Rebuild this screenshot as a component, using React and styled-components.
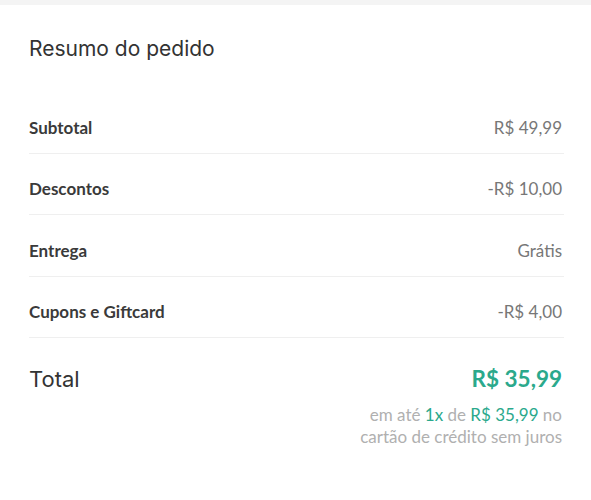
import React from "react";
import styled, { createGlobalStyle } from "styled-components";

const Global = createGlobalStyle`
  html, body { margin: 0; padding: 0; background: #fff; }
  body { font-family: Lato, "Liberation Sans", sans-serif; -webkit-font-smoothing: antialiased; }
`;

const TopBar = styled.div`
  height: 5px;
  background: #f4f4f4;
`;

const Panel = styled.section`
  padding: 30px 29px 0 29px;
  width: 535px;
`;

const Title = styled.h2`
  margin: 0;
  font-family: Inter, "Open Sans", sans-serif;
  font-weight: 400;
  font-size: 21px;
  color: #333;
  line-height: 28px;
`;

const List = styled.div`
  margin-top: 32px;
  display: flex;
  flex-direction: column;
`;

const Row = styled.div`
  display: flex;
  align-items: center;
  justify-content: space-between;
  padding: 26.33px 2px 16px 0;
  line-height: 18px;
  border-bottom: 1px solid #efefef;
  &:first-child { padding-top: 24px; }
`;

const Label = styled.span`
  font-weight: 700;
  font-size: 17px;
  color: #3a3a3a;
`;

const Value = styled.span`
  font-size: 17px;
  color: #777;
`;

const TotalRow = styled.div`
  display: flex;
  justify-content: space-between;
  align-items: center;
  line-height: 30px;
  margin-top: 26px;
  padding-right: 2px;
`;

const TotalLabel = styled.span`
  font-family: Inter, "Open Sans", sans-serif;
  font-size: 22px;
  color: #333;
`;

const TotalValue = styled.span`
  font-weight: 700;
  font-size: 22.5px;
  color: #2ba98c;
`;

const Installments = styled.p`
  margin: 10px 0 0 auto;
  padding-right: 2px;
  text-align: right;
  font-size: 17px;
  line-height: 22px;
  color: #b0b0b0;
  width: 240px;
`;

const Green = styled.span`
  color: #2ba98c;
`;

const rows = [
  ["Subtotal", "R$ 49,99"],
  ["Descontos", "-R$ 10,00"],
  ["Entrega", "Grátis"],
  ["Cupons e Giftcard", "-R$ 4,00"],
];

export default function App() {
  return (
    <>
      <Global />
      <TopBar />
      <Panel>
        <Title>Resumo do pedido</Title>
        <List>
          {rows.map(([l, v]) => (
            <Row key={l}>
              <Label>{l}</Label>
              <Value>{v}</Value>
            </Row>
          ))}
        </List>
        <TotalRow>
          <TotalLabel>Total</TotalLabel>
          <TotalValue>R$ 35,99</TotalValue>
        </TotalRow>
        <Installments>
          em até <Green>1x</Green> de <Green>R$ 35,99</Green> no
          <br />
          cartão de crédito sem juros
        </Installments>
      </Panel>
    </>
  );
}
